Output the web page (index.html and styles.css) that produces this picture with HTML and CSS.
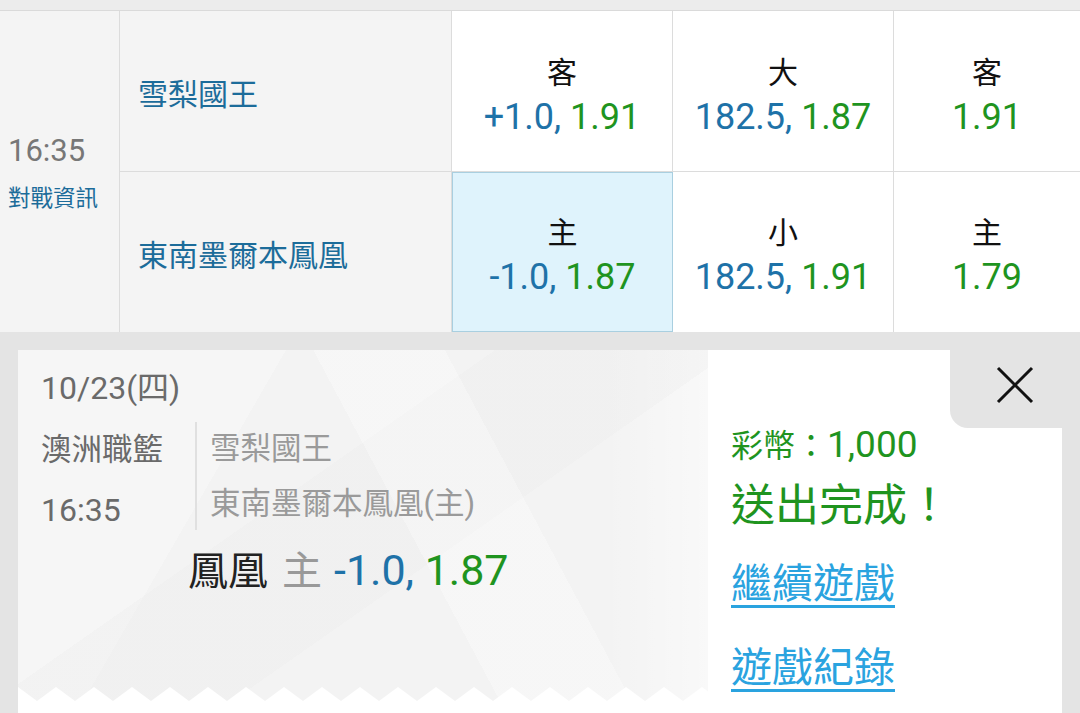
FILE: index.html
```html
<!DOCTYPE html>
<html lang="zh-Hant">
<head>
    <meta charset="UTF-8">
    <meta name="viewport" content="width=device-width, initial-scale=1.0">
    <title>投注完成</title>
    <link rel="stylesheet" href="styles.css">
</head>
<body>
    <div class="topbar"></div>
    <div class="board">
        <div class="cell time-cell">
            <div class="time">16:35</div>
            <div class="info">對戰資訊</div>
        </div>
        <div class="cell team">雪梨國王</div>
        <div class="cell odds">
            <div class="side">客</div>
            <div class="val"><span class="blue">+1.0,</span> <span class="green">1.91</span></div>
        </div>
        <div class="cell odds">
            <div class="side">大</div>
            <div class="val"><span class="blue">182.5,</span> <span class="green">1.87</span></div>
        </div>
        <div class="cell odds last">
            <div class="side">客</div>
            <div class="val"><span class="green">1.91</span></div>
        </div>
        <div class="cell team row2">東南墨爾本鳳凰</div>
        <div class="cell odds row2 picked">
            <div class="side">主</div>
            <div class="val"><span class="blue">-1.0,</span> <span class="green">1.87</span></div>
        </div>
        <div class="cell odds row2">
            <div class="side">小</div>
            <div class="val"><span class="blue">182.5,</span> <span class="green">1.91</span></div>
        </div>
        <div class="cell odds row2 last">
            <div class="side">主</div>
            <div class="val"><span class="green">1.79</span></div>
        </div>
    </div>

    <div class="sheet">
        <div class="card">
            <div class="ticket">
                <div class="date">10/23(四)</div>
                <div class="match">
                    <div class="league">
                        <div>澳洲職籃</div>
                        <div class="num">16:35</div>
                    </div>
                    <div class="teams">
                        <div>雪梨國王</div>
                        <div>東南墨爾本鳳凰(主)</div>
                    </div>
                </div>
                <div class="pick">
                    <span class="pick-team">鳳凰</span><span class="pick-side">主</span><span class="pick-odds"><span class="blue">-1.0,</span> <span class="green">1.87</span></span>
                </div>
                <svg class="zigzag" width="100%" height="16">
                    <defs>
                        <pattern id="zz" width="38" height="16" patternUnits="userSpaceOnUse">
                            <path d="M0 1 L19 15 L38 1 V16 H0 Z" fill="#fff"/>
                        </pattern>
                    </defs>
                    <rect width="100%" height="16" fill="url(#zz)"/>
                </svg>
            </div>
            <div class="result">
                <div class="coins">彩幣：<span class="amount">1,000</span></div>
                <div class="done">送出完成！</div>
                <div class="link-row"><a href="#" class="link">繼續遊戲</a></div>
                <div class="link-row second"><a href="#" class="link">遊戲紀錄</a></div>
            </div>
            <div class="close">
                <svg width="38" height="38" viewBox="0 0 38 38">
                    <path d="M2 2 L36 36 M36 2 L2 36" stroke="#111" stroke-width="3" fill="none"/>
                </svg>
            </div>
        </div>
    </div>
</body>
</html>
```

FILE: styles.css
```css
body {
    margin: 0;
    background-color: #e4e4e4;
    font-family: "Roboto", "Noto Sans CJK TC", sans-serif;
    overflow: hidden;
}
.topbar {
    height: 10px;
    background-color: #ececec;
    border-bottom: 1px solid #dadada;
}
.board {
    display: grid;
    grid-template-columns: 120px 332px 221px 221px 1fr;
    grid-template-rows: 161px 160px;
    background-color: #fff;
}
.cell {
    border-right: 1px solid #dcdcdc;
    border-bottom: 1px solid #dcdcdc;
    box-sizing: border-box;
}
.cell.row2 {
    border-bottom: none;
}
.cell.last {
    border-right: none;
}
.time-cell {
    grid-row: 1 / 3;
    background-color: #f4f4f4;
    border-bottom: none;
    display: flex;
    flex-direction: column;
    justify-content: center;
    padding-left: 8px;
}
.time {
    font-size: 31px;
    line-height: 40px;
    color: #777;
}
.info {
    font-size: 22.5px;
    line-height: 28px;
    margin-top: 13px;
    color: #1c6c9a;
}
.team {
    background-color: #f4f4f4;
    display: flex;
    align-items: center;
    padding-left: 18px;
    padding-top: 2px;
    font-size: 30px;
    color: #1c6c9a;
}
.odds {
    display: flex;
    flex-direction: column;
    justify-content: center;
    align-items: center;
    padding-top: 8px;
}
.odds.row2 {
    padding-top: 6px;
}
.odds.picked {
    background-color: #dff3fc;
    border: 1px solid #a9cfe0;
}
.side {
    font-size: 30px;
    line-height: 45px;
    color: #111;
}
.val {
    font-size: 36px;
    line-height: 45px;
}
.blue {
    color: #1e72a8;
}
.green {
    color: #1f941f;
}
.sheet {
    padding: 18px 18px 0;
}
.card {
    position: relative;
    display: flex;
    height: 380px;
    background-color: #fff;
}
.ticket {
    position: relative;
    width: 690px;
    height: 352px;
    box-sizing: border-box;
    padding: 20px 0 0 23px;
    background-color: #f3f3f3;
    background-image:
        linear-gradient(62deg, transparent 55%, rgba(255, 255, 255, 0.3) 55%, rgba(255, 255, 255, 0.3) 70%, transparent 70%),
        linear-gradient(-35deg, transparent 40%, rgba(235, 235, 235, 0.3) 40%, rgba(235, 235, 235, 0.3) 60%, transparent 60%),
        linear-gradient(120deg, rgba(255, 255, 255, 0.25) 30%, transparent 30%),
        linear-gradient(90deg, transparent 85%, rgba(255, 255, 255, 0.5) 100%);
    color: #6a6a6a;
}
.date {
    font-size: 32px;
    line-height: 36px;
}
.match {
    display: flex;
    margin-top: 16px;
    height: 108px;
}
.league {
    width: 154px;
    padding-top: 8px;
    font-size: 30.5px;
    line-height: 40px;
}
.league .num {
    margin-top: 20px;
    font-size: 32px;
}
.teams {
    border-left: 2px solid #e0e0e0;
    padding: 7px 0 0 13px;
    font-size: 30.5px;
    line-height: 40px;
    color: #9a9a9a;
}
.teams div + div {
    margin-top: 15px;
}
.pick {
    margin-top: 16px;
    padding-left: 147px;
    font-size: 40px;
    line-height: 48px;
}
.pick-team {
    color: #222;
    margin-right: 14px;
}
.pick-side {
    color: #999;
    margin-right: 12px;
}
.pick-odds {
    font-size: 43px;
}
.zigzag {
    position: absolute;
    left: 0;
    bottom: 0;
    display: block;
}
.result {
    flex: 1;
    padding: 75px 0 0 23px;
}
.coins {
    font-size: 32px;
    line-height: 40px;
    color: #1f941f;
}
.amount {
    font-size: 37px;
}
.done {
    margin-top: 14px;
    font-size: 44px;
    line-height: 52px;
    color: #1f941f;
}
.link-row {
    margin-top: 27px;
    line-height: 50px;
}
.link-row.second {
    margin-top: 25px;
}
.link {
    font-size: 41px;
    color: #2aa3df;
    text-decoration: underline;
    text-decoration-thickness: 3px;
    text-underline-offset: 7px;
}
.close {
    position: absolute;
    top: 0;
    right: -18px;
    width: 130px;
    height: 78px;
    background-color: #e4e4e4;
    border-bottom-left-radius: 18px;
    display: flex;
    align-items: center;
    justify-content: center;
    padding-bottom: 8px;
    box-sizing: border-box;
}
```
